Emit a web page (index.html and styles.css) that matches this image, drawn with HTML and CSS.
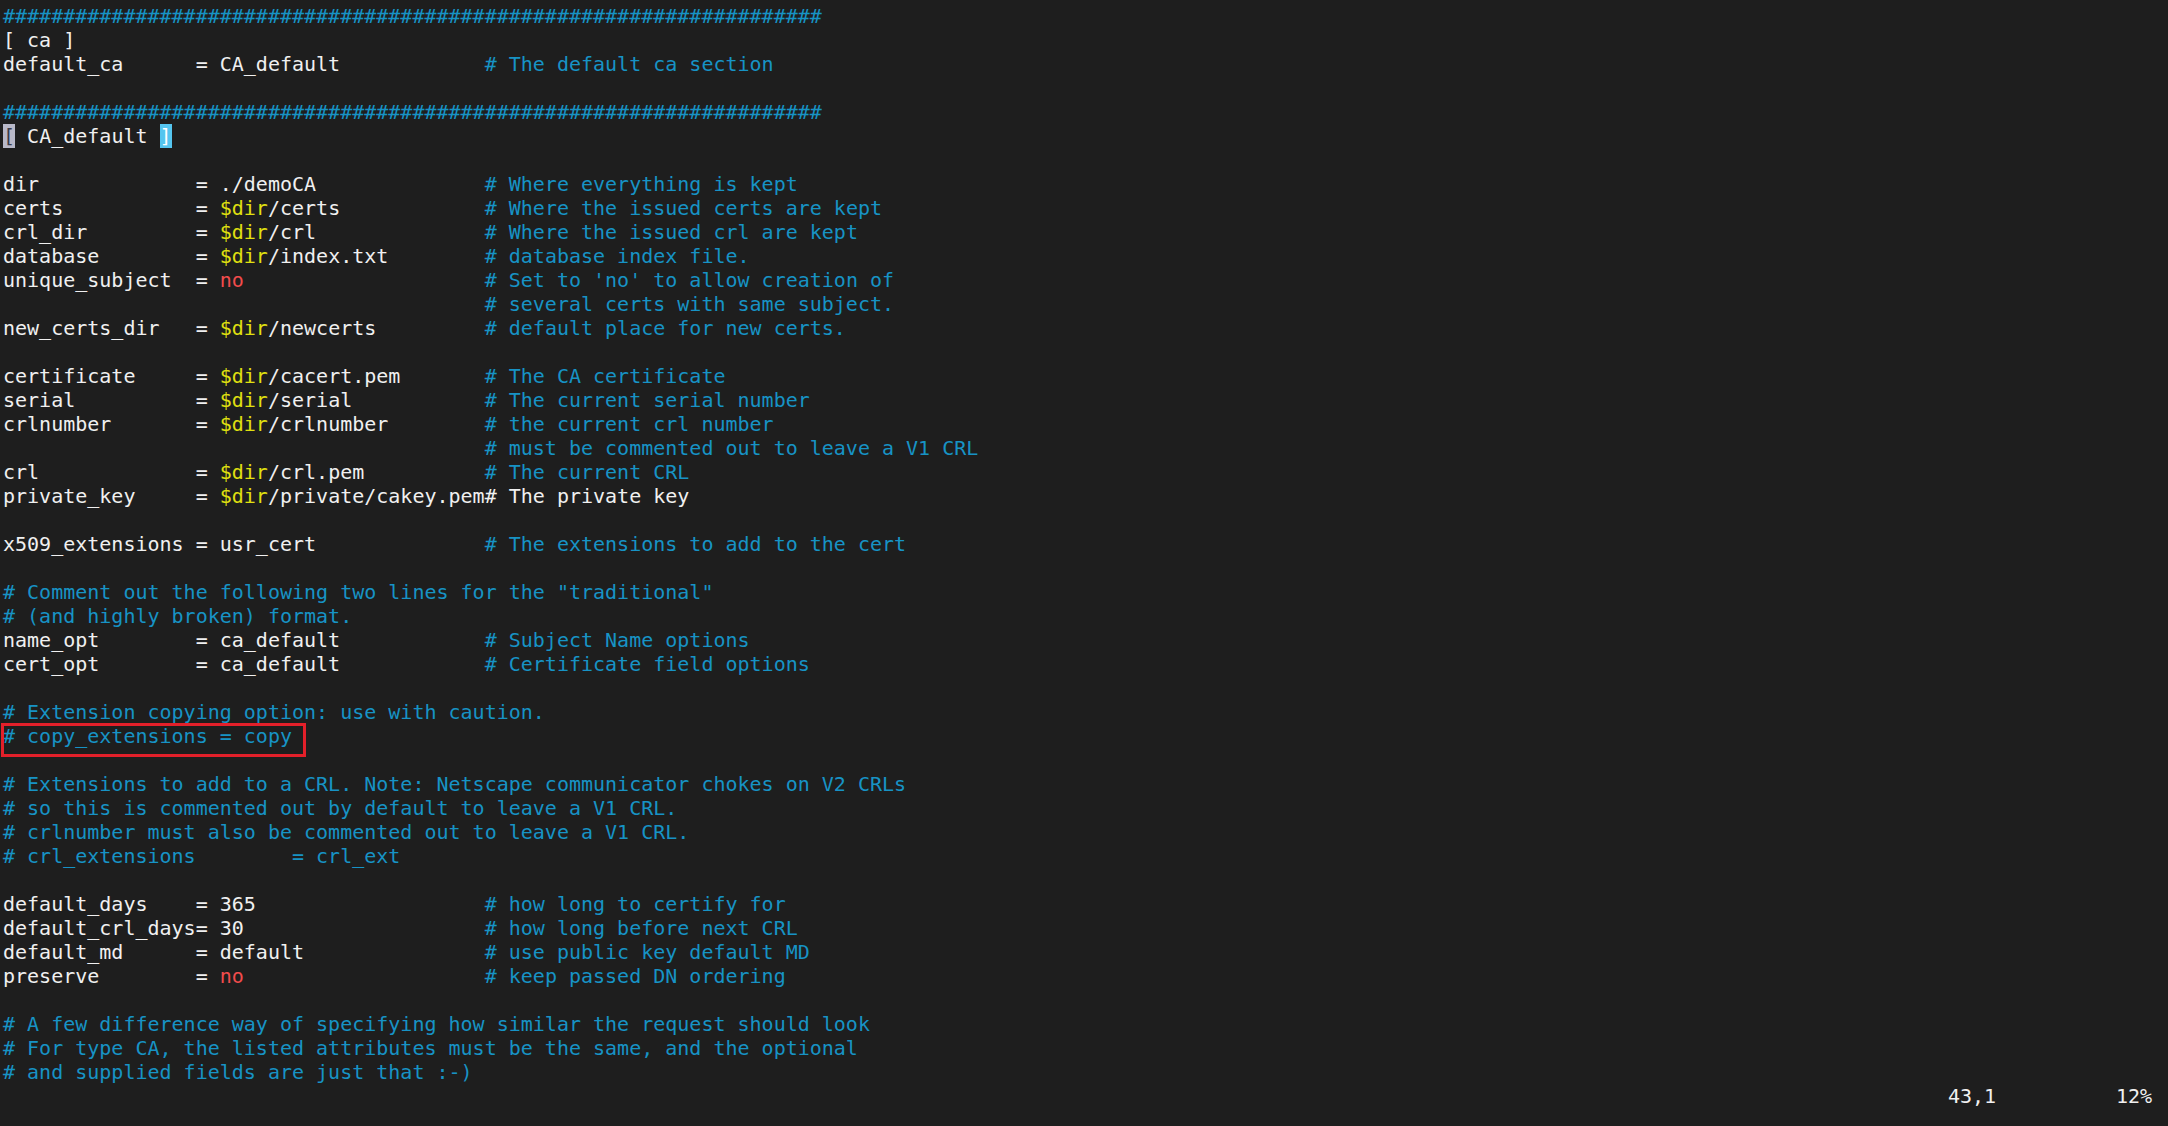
FILE: index.html
```html
<!DOCTYPE html>
<html>
<head>
<meta charset="utf-8">
<link rel="stylesheet" href="styles.css">
</head>
<body>
<div class="screen">
<div class="ln c">####################################################################</div>
<div class="ln">[ ca ]</div>
<div class="ln">default_ca      = CA_default            <span class="c"># The default ca section</span></div>
<div class="ln"> </div>
<div class="ln c">####################################################################</div>
<div class="ln"><span class="cur">[</span> CA_default <span class="match">]</span></div>
<div class="ln"> </div>
<div class="ln">dir             = ./demoCA              <span class="c"># Where everything is kept</span></div>
<div class="ln">certs           = <span class="y">$dir</span>/certs            <span class="c"># Where the issued certs are kept</span></div>
<div class="ln">crl_dir         = <span class="y">$dir</span>/crl              <span class="c"># Where the issued crl are kept</span></div>
<div class="ln">database        = <span class="y">$dir</span>/index.txt        <span class="c"># database index file.</span></div>
<div class="ln">unique_subject  = <span class="r">no</span>                    <span class="c"># Set to 'no' to allow creation of</span></div>
<div class="ln">                                        <span class="c"># several certs with same subject.</span></div>
<div class="ln">new_certs_dir   = <span class="y">$dir</span>/newcerts         <span class="c"># default place for new certs.</span></div>
<div class="ln"> </div>
<div class="ln">certificate     = <span class="y">$dir</span>/cacert.pem       <span class="c"># The CA certificate</span></div>
<div class="ln">serial          = <span class="y">$dir</span>/serial           <span class="c"># The current serial number</span></div>
<div class="ln">crlnumber       = <span class="y">$dir</span>/crlnumber        <span class="c"># the current crl number</span></div>
<div class="ln">                                        <span class="c"># must be commented out to leave a V1 CRL</span></div>
<div class="ln">crl             = <span class="y">$dir</span>/crl.pem          <span class="c"># The current CRL</span></div>
<div class="ln">private_key     = <span class="y">$dir</span>/private/cakey.pem# The private key</div>
<div class="ln"> </div>
<div class="ln">x509_extensions = usr_cert              <span class="c"># The extensions to add to the cert</span></div>
<div class="ln"> </div>
<div class="ln c"># Comment out the following two lines for the "traditional"</div>
<div class="ln c"># (and highly broken) format.</div>
<div class="ln">name_opt        = ca_default            <span class="c"># Subject Name options</span></div>
<div class="ln">cert_opt        = ca_default            <span class="c"># Certificate field options</span></div>
<div class="ln"> </div>
<div class="ln c"># Extension copying option: use with caution.</div>
<div class="ln c boxed"># copy_extensions = copy</div>
<div class="ln"> </div>
<div class="ln c"># Extensions to add to a CRL. Note: Netscape communicator chokes on V2 CRLs</div>
<div class="ln c"># so this is commented out by default to leave a V1 CRL.</div>
<div class="ln c"># crlnumber must also be commented out to leave a V1 CRL.</div>
<div class="ln c"># crl_extensions        = crl_ext</div>
<div class="ln"> </div>
<div class="ln">default_days    = 365                   <span class="c"># how long to certify for</span></div>
<div class="ln">default_crl_days= 30                    <span class="c"># how long before next CRL</span></div>
<div class="ln">default_md      = default               <span class="c"># use public key default MD</span></div>
<div class="ln">preserve        = <span class="r">no</span>                    <span class="c"># keep passed DN ordering</span></div>
<div class="ln"> </div>
<div class="ln c"># A few difference way of specifying how similar the request should look</div>
<div class="ln c"># For type CA, the listed attributes must be the same, and the optional</div>
<div class="ln c"># and supplied fields are just that :-)</div>
<div class="ln status"><span class="pos">43,1</span><span class="pct">12%</span></div>
</div>
</body>
</html>
```

FILE: styles.css
```css
html, body {
  margin: 0;
  padding: 0;
  background: #1e1e1e;
}
.screen {
  width: 2168px;
  height: 1126px;
  box-sizing: border-box;
  padding: 4px 0 0 3px;
  background: #1e1e1e;
  color: #f0f0f0;
  font-family: "DejaVu Sans Mono", "Liberation Mono", monospace;
  font-size: 20px;
  line-height: 24px;
  overflow: hidden;
}
.ln {
  height: 24px;
  white-space: pre;
}
.c { color: #1793c5; }
.y { color: #e0e010; }
.r { color: #f14c4c; }
.cur {
  background: #b8b8c8;
  color: #3a3a4a;
}
.match {
  background: #55c5ef;
  color: #ffffff;
}
.boxed {
  position: relative;
}
.boxed::after {
  content: "";
  position: absolute;
  left: -2px;
  top: -1px;
  width: 299px;
  height: 28px;
  border: 3px solid #e3202a;
}
.status {
  display: flex;
  padding-left: 1945px;
  color: #f0f0f0;
}
.pos { width: 168px; }
```
